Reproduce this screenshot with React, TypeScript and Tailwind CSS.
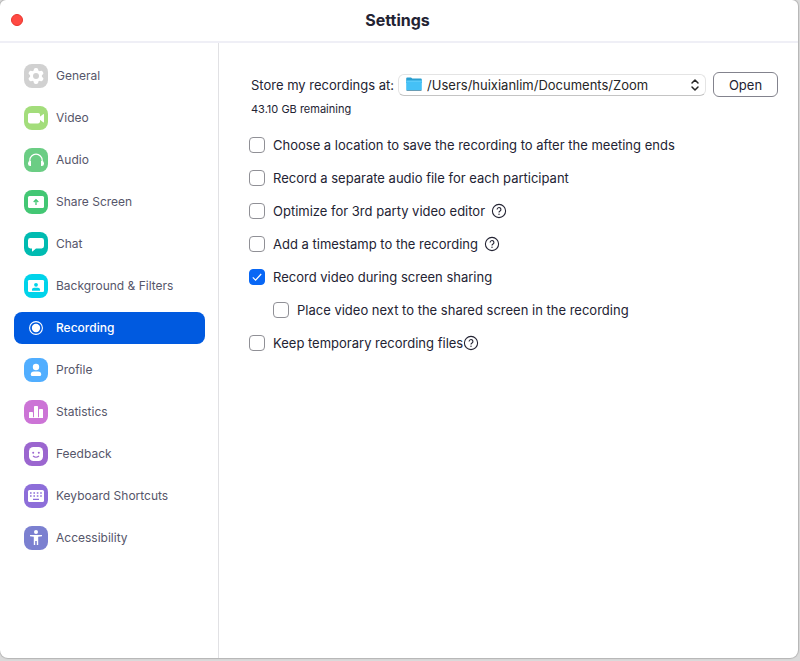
import { useState } from "react";
import type { ReactNode } from "react";
import clsx from "clsx";

type NavItem = {
  label: string;
  tile: string;
  icon: ReactNode;
};

const NAV_ITEMS: NavItem[] = [
  {
    label: "General",
    tile: "bg-[#d1d1d1]",
    icon: (
      <>
        <circle cx="12" cy="12" r="4.4" fill="none" stroke="#fff" strokeWidth="3.2" />
        <g fill="#fff">
          <rect x="9.8" y="4" width="4.4" height="16" rx="1.8" />
          <rect x="9.8" y="4" width="4.4" height="16" rx="1.8" transform="rotate(60 12 12)" />
          <rect x="9.8" y="4" width="4.4" height="16" rx="1.8" transform="rotate(120 12 12)" />
        </g>
        <circle cx="12" cy="12" r="3" fill="#d1d1d1" />
      </>
    ),
  },
  {
    label: "Video",
    tile: "bg-[#a3dd7b]",
    icon: (
      <g fill="#fff">
        <rect x="4" y="7" width="12" height="10.4" rx="1.8" />
        <path d="M15.5 11 19.2 8.2Q20 7.7 20 8.6V15.8Q20 16.7 19.2 16.2L15.5 13.4Z" />
      </g>
    ),
  },
  {
    label: "Audio",
    tile: "bg-[#6bcd84]",
    icon: (
      <>
        <path d="M5.8 15V12.4a6.2 6.2 0 0 1 12.4 0V15" fill="none" stroke="#fff" strokeWidth="1.2" />
        <path
          d="M7 13V18H6.2A2.2 2.2 0 0 1 4 15.8V15.2A2.2 2.2 0 0 1 6.2 13ZM17 13V18H17.8A2.2 2.2 0 0 0 20 15.8V15.2A2.2 2.2 0 0 0 17.8 13Z"
          fill="#fff"
        />
      </>
    ),
  },
  {
    label: "Share Screen",
    tile: "bg-[#43c774]",
    icon: (
      <>
        <rect x="4" y="6" width="16" height="12" rx="1.5" fill="#fff" />
        <path d="M12 15V10.2M9.7 12 12 9.7 14.3 12" fill="none" stroke="#43c774" strokeWidth="1.3" />
      </>
    ),
  },
  {
    label: "Chat",
    tile: "bg-[#00bbb1]",
    icon: (
      <path
        d="M6.4 6H17.6Q20 6 20 8.4V14Q20 16.4 17.6 16.4H12L8.8 19.2Q8 19.8 8 18.8V16.4H6.4Q4 16.4 4 14V8.4Q4 6 6.4 6Z"
        fill="#fff"
      />
    ),
  },
  {
    label: "Background & Filters",
    tile: "bg-[#00d3ea]",
    icon: (
      <>
        <rect x="4" y="6" width="16" height="12" rx="1.2" fill="#fff" />
        <circle cx="12" cy="10.8" r="1.9" fill="#00d3ea" />
        <path d="M8 16.8V15.4Q8 13.8 10 13.8H14Q16 13.8 16 15.4V16.8Z" fill="#00d3ea" />
      </>
    ),
  },
  {
    label: "Recording",
    tile: "bg-transparent",
    icon: (
      <>
        <circle cx="12" cy="12" r="6.4" fill="none" stroke="#fff" strokeWidth="1.1" />
        <circle cx="12" cy="12" r="4.2" fill="#fff" />
      </>
    ),
  },
  {
    label: "Profile",
    tile: "bg-[#51aeff]",
    icon: (
      <g fill="#fff">
        <circle cx="12" cy="9" r="3.2" />
        <path d="M6.8 16.4Q6.8 13.4 10 13.4H14Q17.2 13.4 17.2 16.4Q17.2 18 15.8 18H8.2Q6.8 18 6.8 16.4Z" />
      </g>
    ),
  },
  {
    label: "Statistics",
    tile: "bg-[#cc74d6]",
    icon: (
      <path
        d="M5 18V12.8Q5 12 5.8 12H8.2Q9 12 9 12.8V17.2H10V6.8Q10 6 10.8 6H13.2Q14 6 14 6.8V17.2H15V9.8Q15 9 15.8 9H18.2Q19 9 19 9.8V18Z"
        fill="#fff"
      />
    ),
  },
  {
    label: "Feedback",
    tile: "bg-[#9b66cf]",
    icon: (
      <>
        <rect x="5" y="5" width="14" height="14" rx="4.5" fill="#fff" />
        <circle cx="9.2" cy="10.8" r="1" fill="#9b66cf" />
        <circle cx="14.8" cy="10.8" r="1" fill="#9b66cf" />
        <path d="M9 14Q12 16.6 15 14" fill="none" stroke="#9b66cf" strokeWidth="1.1" />
      </>
    ),
  },
  {
    label: "Keyboard Shortcuts",
    tile: "bg-[#8d6ed9]",
    icon: (
      <>
        <rect x="4" y="6" width="16" height="12" rx="1.5" fill="#fff" />
        <path
          d="M6 9H18M6 12H18"
          fill="none"
          stroke="#8d6ed9"
          strokeOpacity="0.75"
          strokeWidth="1.8"
          strokeDasharray="1.6 1.8"
        />
        <path d="M9 15.4H15" stroke="#8d6ed9" strokeWidth="1.2" />
      </>
    ),
  },
  {
    label: "Accessibility",
    tile: "bg-[#7b80d0]",
    icon: (
      <g fill="#fff">
        <circle cx="12" cy="6" r="2" />
        <path d="M6 9H18V10.2L14.2 10.8V19H12.8V15H11.2V19H9.8V10.8L6 10.2Z" />
      </g>
    ),
  },
];

type Option = {
  id: string;
  label: string;
  checked?: boolean;
  nested?: boolean;
  help?: "spaced" | "tight";
};

const OPTIONS: Option[] = [
  { id: "choose-location", label: "Choose a location to save the recording to after the meeting ends" },
  { id: "separate-audio", label: "Record a separate audio file for each participant" },
  { id: "optimize", label: "Optimize for 3rd party video editor", help: "spaced" },
  { id: "timestamp", label: "Add a timestamp to the recording", help: "spaced" },
  { id: "screen-sharing", label: "Record video during screen sharing", checked: true },
  { id: "next-to-screen", label: "Place video next to the shared screen in the recording", nested: true },
  { id: "keep-files", label: "Keep temporary recording files", help: "tight" },
];

function HelpButton({ tight }: { tight: boolean }) {
  return (
    <button type="button" aria-label="Help" className={tight ? "" : "ml-1.5"}>
      <svg viewBox="0 0 16 16" className="size-4" fill="none" stroke="#232333">
        <circle cx="8" cy="8" r="6.6" strokeWidth="1.1" />
        <path d="M6.1 6.5a1.9 1.9 0 1 1 2.9 1.6Q8 8.6 8 9.6" strokeWidth="1.1" />
        <circle cx="8" cy="11.3" r="0.7" fill="#232333" stroke="none" />
      </svg>
    </button>
  );
}

function OptionRow({ option }: { option: Option }) {
  const [checked, setChecked] = useState(option.checked ?? false);
  return (
    <div className={clsx("flex h-[33px] items-center", option.nested && "pl-6")}>
      <span className="relative mr-2 flex">
        <input
          id={option.id}
          type="checkbox"
          checked={checked}
          onChange={(e) => setChecked(e.target.checked)}
          className="size-4 appearance-none rounded border border-[#909096] bg-white checked:border-[#0867f5] checked:bg-[#0867f5]"
        />
        {checked && (
          <svg viewBox="0 0 16 16" className="pointer-events-none absolute inset-0 size-4">
            <path d="M3.8 8.4 6.6 11.2 12.2 5" fill="none" stroke="#fff" strokeWidth="1.2" />
          </svg>
        )}
      </span>
      <label htmlFor={option.id}>{option.label}</label>
      {option.help && <HelpButton tight={option.help === "tight"} />}
    </div>
  );
}

function Sidebar() {
  const [active, setActive] = useState("Recording");
  return (
    <nav className="flex w-[219px] shrink-0 flex-col gap-2.5 border-r border-[#e1e1e4] pt-[17px] pr-[13px] pl-3.5">
      {NAV_ITEMS.map((item) => (
        <button
          key={item.label}
          type="button"
          onClick={() => setActive(item.label)}
          className={clsx(
            "flex h-8 items-center gap-2 rounded-lg pl-2.5 text-left text-xs",
            item.label === active ? "bg-[#005ae0] font-medium text-white" : "text-[#56566a]",
          )}
        >
          <svg viewBox="0 0 24 24" className={clsx("size-6 rounded-lg", item.tile)}>
            {item.icon}
          </svg>
          {item.label}
        </button>
      ))}
    </nav>
  );
}

function FolderIcon() {
  return (
    <svg viewBox="0 0 16 14" className="pointer-events-none absolute top-[3px] left-2 h-3.5 w-4">
      <path d="M0.2 1.4Q0.2 0.4 1.2 0.4H5L6.3 1.4H14.8Q15.8 1.4 15.8 2.4V6H0.2Z" fill="#2a9fd0" />
      <rect x="0.2" y="3.6" width="15.6" height="10" rx="0.8" fill="#45c1f6" />
      <path d="M0.2 4.2H15.8" stroke="#6fd3fb" strokeWidth="0.8" />
      <path d="M0.6 13.5H15.4" stroke="#5a8ba3" strokeWidth="0.8" />
    </svg>
  );
}

function RecordingPanel() {
  return (
    <main className="min-w-0 flex-1 pt-[29px] pr-5 pl-[30px] text-[13px] leading-5 text-[#232333]">
      <div className="flex items-center pl-0.5">
        <label htmlFor="location" className="shrink-0">
          Store my recordings at:
        </label>
        <div className="relative mr-[7px] ml-1 min-w-0 flex-1">
          <select
            id="location"
            className="block h-[22px] w-full appearance-none rounded-md border border-[#e4e4e4] border-b-[#c4c4c4] bg-white pr-6 pl-7 text-[#262626]"
          >
            <option>/Users/huixianlim/Documents/Zoom</option>
          </select>
          <FolderIcon />
          <svg
            viewBox="0 0 10 14"
            className="pointer-events-none absolute top-1 right-1.5 h-3.5 w-2.5"
            fill="none"
            stroke="#262626"
            strokeWidth="1.5"
            strokeLinecap="round"
            strokeLinejoin="round"
          >
            <path d="M2 5 5 2 8 5M2 9 5 12 8 9" />
          </svg>
        </div>
        <button type="button" className="h-[25px] w-[65px] rounded-md border border-[#83838d] bg-white">
          Open
        </button>
      </div>
      <p className="mt-1 pl-0.5 text-[11px] leading-4">43.10 GB remaining</p>
      <div className="mt-[11px] flex flex-col">
        {OPTIONS.map((option) => (
          <OptionRow key={option.id} option={option} />
        ))}
      </div>
    </main>
  );
}

export default function App() {
  return (
    <div className="flex min-h-screen flex-col bg-[#dadada] pr-0.5 pb-[3px] font-['Inter',sans-serif]">
      <div className="flex flex-1 flex-col rounded-t-md rounded-b-lg bg-white shadow-[0_0_1px_1px_#b4b4b4]">
        <header className="grid h-[43px] grid-cols-[1fr_auto_1fr] items-center border-b-2 border-[#efeff6] pr-3.5 pb-0.5 pl-[11px]">
          <button type="button" aria-label="Close" className="size-3 rounded-full border border-[#e9342c] bg-[#ff4a43]" />
          <h1 className="text-base font-bold text-[#232333]">Settings</h1>
        </header>
        <div className="flex flex-1">
          <Sidebar />
          <RecordingPanel />
        </div>
      </div>
    </div>
  );
}
